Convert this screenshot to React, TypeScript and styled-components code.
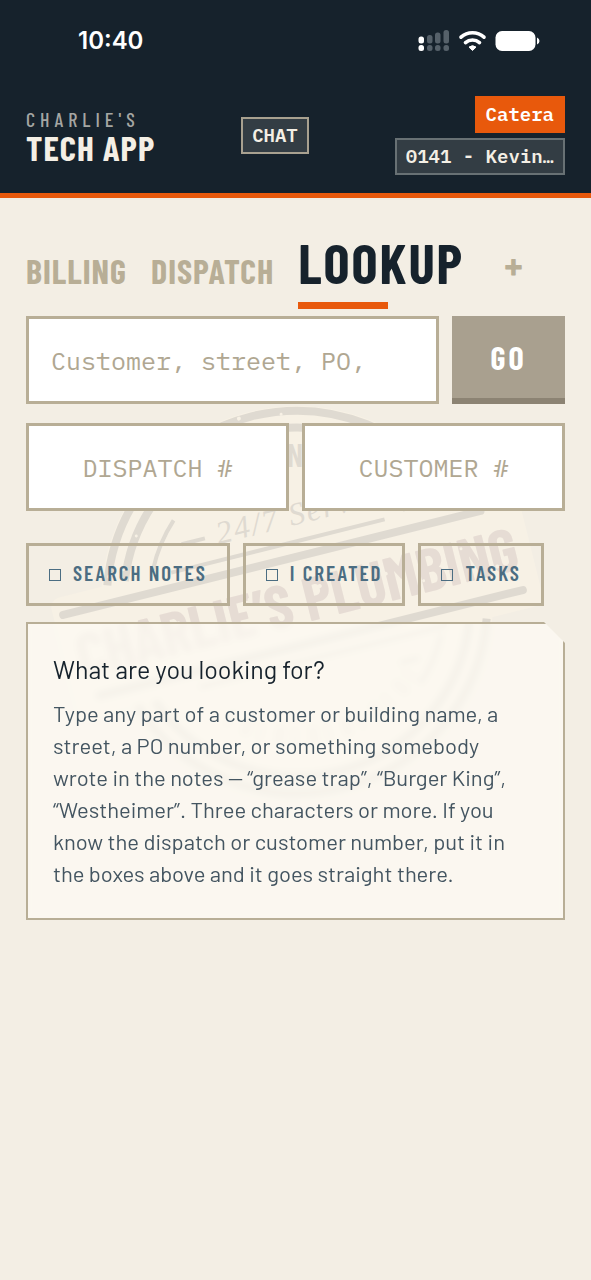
import React from "react";
import styled, { createGlobalStyle } from "styled-components";

const ink = "#16222c";
const cream = "#f4efe5";
const sand = "#b8ae96";
const orange = "#e8590c";
const condensed = `"Barlow Condensed", "Roboto Condensed", "Liberation Sans", sans-serif`;
const body = `"Barlow", "Roboto", sans-serif`;
const mono = `"IBM Plex Mono", "Liberation Mono", monospace`;

const GlobalStyle = createGlobalStyle`
  * { box-sizing: border-box; }
  body { margin: 0; background: ${cream}; color: ${ink}; font-family: ${body}; }
  button, input { font: inherit; margin: 0; border-radius: 0; }
`;

const Page = styled.div`
  position: relative;
  min-height: 100vh;
  overflow: hidden;
  background: #f3eee4;
`;

const Header = styled.header`
  background: ${ink};
  border-bottom: 5px solid ${orange};
  padding: 0 26px 18px;
`;

const StatusBar = styled.div`
  display: flex;
  justify-content: space-between;
  align-items: center;
  height: 82px;
  margin-bottom: 14px;
  padding: 0 25px 0 52px;
  color: #fff;
  font: 600 24px/30px "Inter", sans-serif;
`;

const HeaderRow = styled.div`
  display: flex;
  justify-content: space-between;
  align-items: center;
`;

const Brand = styled.div`
  display: flex;
  flex-direction: column;
  padding-bottom: 2px;
  font-family: ${condensed};
`;

const BrandOver = styled.span`
  color: #a5a6a3;
  font-size: 20px;
  font-weight: 500;
  line-height: 24px;
  letter-spacing: 5px;
`;

const BrandName = styled.span`
  color: ${cream};
  font-size: 35px;
  font-weight: 700;
  line-height: 32px;
  letter-spacing: 1px;
`;

const UserStack = styled.div`
  display: flex;
  flex-direction: column;
  align-items: flex-end;
  gap: 5px;
`;

const Chip = styled.button<{ $tone?: "solid" | "light" }>`
  height: 37px;
  padding: 0 9px 1px;
  border: 2px solid ${(p) => (p.$tone === "solid" ? orange : p.$tone === "light" ? "#a8a190" : "#687174")};
  background: ${(p) => (p.$tone === "solid" ? orange : "#333d44")};
  color: ${(p) => (p.$tone === "solid" ? "#fff" : cream)};
  font-family: ${mono};
  font-size: 19px;
  font-weight: 600;
  line-height: 24px;
`;

const Main = styled.main`
  padding: 32px 26px;
`;

const Tabs = styled.nav`
  display: flex;
  align-items: baseline;
  gap: 24px;
  margin-bottom: 7px;
`;

const Tab = styled.button<{ $active?: boolean }>`
  padding: 0;
  border: 0;
  background: none;
  color: ${(p) => (p.$active ? ink : sand)};
  font-family: ${condensed};
  font-size: ${(p) => (p.$active ? 55 : 34)}px;
  font-weight: 700;
  line-height: ${(p) => (p.$active ? 64 : 40)}px;
  letter-spacing: ${(p) => (p.$active ? 2 : 1)}px;
  text-align: left;
`;

const TabBar = styled.span`
  display: block;
  width: 54%;
  height: 7px;
  margin-top: 8px;
  background: ${orange};
`;

const AddTab = styled(Tab)`
  align-self: center;
  margin-left: 16px;
  padding-bottom: 12px;
  font-size: 42px;
  line-height: 44px;
`;

const Stack = styled.form`
  display: flex;
  flex-direction: column;
  gap: 19px;
`;

const Row = styled.div`
  display: flex;
  gap: 13px;
`;

const Field = styled.input<{ $centered?: boolean }>`
  flex: 1;
  min-width: 0;
  height: 88px;
  padding: 0 22px;
  border: 3px solid ${sand};
  background: #fff;
  color: ${ink};
  font-family: ${mono};
  font-size: 25px;
  text-align: ${(p) => (p.$centered ? "center" : "left")};
  &::placeholder { color: #b0a792; opacity: 1; }
`;

const GoButton = styled.button`
  width: 113px;
  height: 88px;
  padding: 0;
  border: 0;
  border-bottom: 6px solid #8c8373;
  background: #a9a08f;
  color: #fff;
  font-family: ${condensed};
  font-size: 32px;
  font-weight: 700;
  letter-spacing: 3px;
`;

const Filters = styled(Row)`
  margin: 13px 0 16px;
`;

const Filter = styled.label`
  display: flex;
  align-items: center;
  gap: 12px;
  height: 63px;
  padding: 0 20px;
  border: 3px solid ${sand};
  color: #4b6d82;
  font-family: ${condensed};
  font-size: 21px;
  font-weight: 600;
  letter-spacing: 2px;
  white-space: nowrap;
`;

const FilterName = styled.span`
  padding-bottom: 4px;
`;

const Tick = styled.input`
  appearance: none;
  width: 12px;
  height: 12px;
  border: 1px solid #4b6d82;
`;

const Panel = styled.section`
  position: relative;
  padding: 25px 25px 29px;
  border: 2px solid ${sand};
  background: rgba(253, 251, 244, 0.72);
  backdrop-filter: blur(3px);
  clip-path: polygon(0 0, calc(100% - 21px) 0, 100% 21px, 100% 100%, 0 100%);
`;

const PanelTitle = styled.h2`
  margin: 0 0 8px;
  font-size: 25px;
  font-weight: 400;
  line-height: 40px;
`;

const PanelText = styled.p`
  margin: 0;
  color: #445561;
  font-size: 22px;
  line-height: 32px;
`;

const Stamp = styled.svg`
  position: absolute;
  top: 402px;
  left: 50%;
  width: 500px;
  height: 400px;
  margin-left: -249px;
  pointer-events: none;
`;

const Content = styled.div`
  position: relative;
`;

const Icons = styled.svg`
  display: block;
`;

function StatusIcons() {
  return (
    <Icons width="122" height="24" viewBox="0 0 122 24" fill="#fff">
      <rect x="0.500" y="7.500" width="5.500" height="7" rx="2.500" />
      <rect x="0.500" y="16" width="5.500" height="6" rx="2.500" />
      <g fill="#56616a">
        <rect x="9" y="6" width="5.500" height="8.500" rx="2.500" />
        <rect x="9" y="16" width="5.500" height="6" rx="2.500" />
        <rect x="17" y="3.500" width="5.500" height="11" rx="2.500" />
        <rect x="17" y="16" width="5.500" height="6" rx="2.500" />
        <rect x="25.500" y="1" width="5.500" height="13.500" rx="2.500" />
        <rect x="25.500" y="16" width="5.500" height="6" rx="2.500" />
      </g>
      <g fill="none" stroke="#fff" strokeWidth="3.600" strokeLinecap="round">
        <path d="M43 8.200a17 17 0 0 1 23 0" />
        <path d="M47.500 13.600a10.500 10.500 0 0 1 14 0" />
      </g>
      <path d="M54.500 21.500l-3.500-3.400a5.500 5.500 0 0 1 7 0z" stroke="#fff" strokeLinejoin="round" />
      <rect x="77.500" y="2" width="40" height="20" rx="6.500" />
      <path d="M119 8.500q2.500 1 2.500 3.500t-2.500 3.500z" />
    </Icons>
  );
}

function StampArt() {
  return (
    <Stamp viewBox="-250 -200 500 400" aria-hidden="true">
      <g transform="rotate(-14)">
        <circle r="196" fill="#f7f1e5" />
        <rect x="-240" y="-62" width="480" height="124" rx="10" fill="#f7f1e5" />
        <g fill="none" stroke="#dfdad1">
          <g strokeWidth="8">
            <path d="M-180 -62A190 190 0 0 1 180 -62" />
            <path d="M-180 62A190 190 0 0 0 180 62" />
            <path d="M-162 -62A173 173 0 0 1 162 -62" />
            <path d="M-162 62A173 173 0 0 0 162 62" />
          </g>
          <g strokeWidth="4">
            <path d="M-132 -66A148 148 0 0 1 -100 -109" />
            <path d="M132 66A148 148 0 0 1 100 109" />
            <path d="M-115 -59H105M125 -64H150" />
            <path d="M-115 59H140" />
            <path d="M-98 -84H-74M85 84H105" />
          </g>
          <g strokeWidth="8" strokeLinecap="round">
            <path d="M-230 -44H200" />
            <path d="M-214 43H222" />
          </g>
          <path d="M-95 95A134 134 0 0 0 95 95" strokeWidth="18" strokeDasharray="5 12 9 8" opacity=".45" />
        </g>
        <text x="-62" y="-75" fill="#dfdad1" fontFamily="Liberation Serif, serif" fontStyle="italic" fontSize="32" letterSpacing="2">24/7 Service</text>
        <text x="0" y="22" textAnchor="middle" fill="#e6dcd4" fontFamily={condensed} fontWeight="700" fontSize="61">CHARLIE’S PLUMBING</text>
        <g fill="#f7f1e5">
          <circle cx="-120" cy="-8" r="2" />
          <circle cx="-98" cy="12" r="1.500" />
          <circle cx="-46" cy="-14" r="1.500" />
          <circle cx="26" cy="-10" r="2" />
          <circle cx="52" cy="8" r="1.500" />
          <circle cx="93" cy="-6" r="2" />
          <circle cx="128" cy="10" r="1.500" />
          <circle cx="172" cy="-12" r="1.500" />
          <circle cx="203" cy="14" r="2" />
          <circle cx="-176" cy="-70" r="2" />
          <circle cx="-160" cy="-74" r="2" />
          <circle cx="-140" cy="-103" r="1.500" />
          <circle cx="-40" cy="-187" r="2" />
          <circle cx="-12" cy="-192" r="2" />
          <circle cx="30" cy="-186" r="1.500" />
        </g>
      </g>
      <text x="-10" y="-135" fill="#dfdad1" fontFamily={condensed} fontWeight="600" fontSize="32">N</text>
    </Stamp>
  );
}

const filters = ["SEARCH NOTES", "I CREATED", "TASKS"];

export default function App() {
  return (
    <Page>
      <GlobalStyle />
      <StampArt />
      <Content>
        <Header>
          <StatusBar>
            <span>10:40</span>
            <StatusIcons />
          </StatusBar>
          <HeaderRow>
            <Brand>
              <BrandOver>CHARLIE'S</BrandOver>
              <BrandName>TECH APP</BrandName>
            </Brand>
            <Chip $tone="light">CHAT</Chip>
            <UserStack>
              <Chip $tone="solid">Catera</Chip>
              <Chip>0141 - Kevin…</Chip>
            </UserStack>
          </HeaderRow>
        </Header>
        <Main>
          <Tabs>
            <Tab>BILLING</Tab>
            <Tab>DISPATCH</Tab>
            <Tab $active>
              LOOKUP
              <TabBar />
            </Tab>
            <AddTab aria-label="Add tab">+</AddTab>
          </Tabs>
          <Stack onSubmit={(e) => e.preventDefault()}>
            <Row>
              <Field aria-label="Customer, street or PO" placeholder="Customer, street, PO," />
              <GoButton type="submit">GO</GoButton>
            </Row>
            <Row>
              <Field $centered aria-label="Dispatch number" placeholder="DISPATCH #" />
              <Field $centered aria-label="Customer number" placeholder="CUSTOMER #" />
            </Row>
            <Filters>
              {filters.map((name) => (
                <Filter key={name}>
                  <Tick type="checkbox" />
                  <FilterName>{name}</FilterName>
                </Filter>
              ))}
            </Filters>
          </Stack>
          <Panel>
            <PanelTitle>What are you looking for?</PanelTitle>
            <PanelText>
              Type any part of a customer or building name, a street, a PO number, or something somebody wrote in the
              notes — “grease trap”, “Burger King”, “Westheimer”. Three characters or more. If you know the dispatch or
              customer number, put it in the boxes above and it goes straight there.
            </PanelText>
          </Panel>
        </Main>
      </Content>
    </Page>
  );
}
